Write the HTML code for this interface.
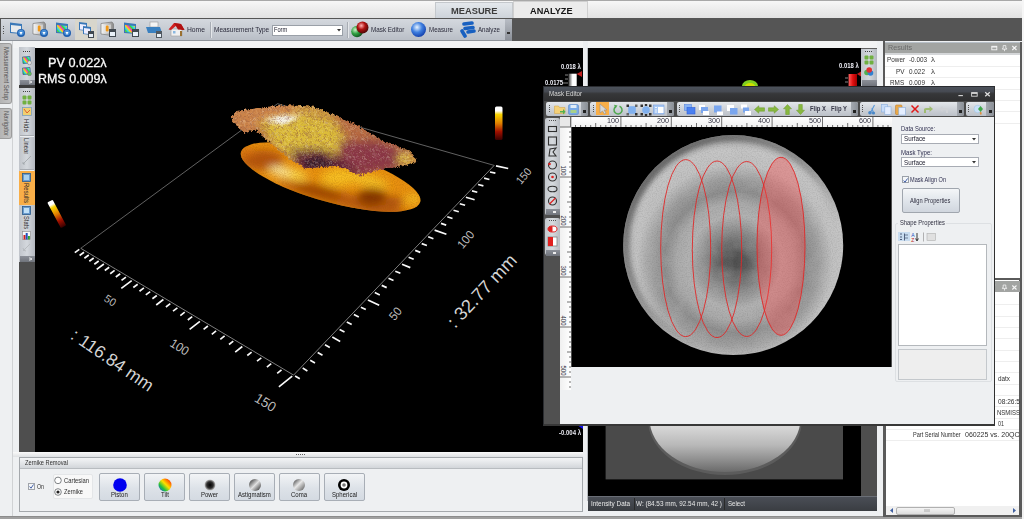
<!DOCTYPE html>
<html><head><meta charset="utf-8"><style>*{margin:0;padding:0;box-sizing:border-box}html,body{width:1024px;height:519px;overflow:hidden;background:#eef0f2;font-family:"Liberation Sans",sans-serif}.a{position:absolute}.t{position:absolute;white-space:nowrap;line-height:1;font-family:"Liberation Sans",sans-serif}</style></head><body>
<div class="a" style="left:0px;top:0px;width:1024px;height:519px;background:#eef0f2;"></div>
<div class="a" style="left:0px;top:0px;width:1024px;height:1px;background:#a8a8a8;"></div>
<div class="a" style="left:0px;top:1px;width:1022px;height:17px;background:linear-gradient(#f7f7f7,#ececec 50%,#e2e2e2);"></div>
<div class="a" style="left:1022px;top:0px;width:2px;height:519px;background:#f6f6f6;"></div>
<div class="a" style="left:435px;top:2px;width:78px;height:16px;background:linear-gradient(#e4e8ec,#cdd3da);border:1px solid #c4c8cc;border-bottom:none"></div>
<div class="t" style="left:451.4px;top:5.63px;font-size:9.7px;color:#3c3c3c;font-weight:bold;transform:scaleX(0.961);transform-origin:0 0;">MEASURE</div>
<div class="a" style="left:513px;top:1px;width:75px;height:17px;background:#ebebeb;border:1px solid #cfcfcf;border-bottom:none"></div>
<div class="t" style="left:530.0px;top:5.63px;font-size:9.7px;color:#161616;font-weight:bold;transform:scaleX(0.948);transform-origin:0 0;">ANALYZE</div>
<div class="a" style="left:0px;top:18px;width:1022px;height:23px;background:#555555;"></div>
<div class="a" style="left:1px;top:19px;width:511px;height:21px;background:linear-gradient(#d4d8de,#c6cbd2 55%,#b9bec6);"></div>
<div class="a" style="left:1px;top:40px;width:511px;height:1px;background:#8e939a;"></div>
<div class="a" style="left:505px;top:19px;width:7px;height:21px;background:linear-gradient(#b8bdc5,#8c9199);"></div>
<div class="a" style="left:507px;top:32px;width:3px;height:2px;background:#333;"></div>
<div class="a" style="left:3px;top:26.0px;width:1px;height:1px;background:#555;"></div>
<div class="a" style="left:3px;top:28.4px;width:1px;height:1px;background:#555;"></div>
<div class="a" style="left:3px;top:30.8px;width:1px;height:1px;background:#555;"></div>
<div class="a" style="left:3px;top:33.2px;width:1px;height:1px;background:#555;"></div>
<svg width="0" height="0" style="position:absolute"><defs><linearGradient id="silv" x1="0" y1="0" x2="1" y2="0"><stop offset="0" stop-color="#fafafa"/><stop offset="0.5" stop-color="#c4c4c4"/><stop offset="1" stop-color="#8a8a8a"/></linearGradient><linearGradient id="rb" x1="0" y1="0" x2="0.6" y2="-0.4" spreadMethod="repeat"><stop offset="0" stop-color="#ffe000"/><stop offset="0.25" stop-color="#ff30c0"/><stop offset="0.5" stop-color="#30e030"/><stop offset="0.75" stop-color="#30d0ff"/><stop offset="1" stop-color="#ffe000"/></linearGradient></defs></svg>
<svg class="a" style="left:9px;top:21px" width="17" height="16" viewBox="0 0 17 16"><path d="M1 1.5 L13 3 L13 13 L1 12 Z" fill="#3a78b8"/><path d="M2 4 L12 5 L12 12 L2 11 Z" fill="#e8eaec"/><circle cx="12" cy="12" r="4" fill="#2060b0"/><circle cx="12" cy="11.5" r="2.8" fill="#4a90d8"/><path d="M10.5 11 L13.5 11 L12 14 Z" fill="#fff"/></svg>
<svg class="a" style="left:32px;top:21px" width="17" height="16" viewBox="0 0 17 16"><path d="M1 2.5 L12 1 L13.5 3 L13.5 13 L12 14.5 L1 13 Z" fill="url(#silv)" stroke="#7a7a7a" stroke-width="0.7"/><path d="M3 4 L11 3.5 L11 12 L3 11.5Z" fill="#e8e8e8" opacity="0.6"/><rect x="5.8" y="4.5" width="2.8" height="6" rx="1.2" fill="#f09818"/><circle cx="12" cy="12" r="4" fill="#2060b0"/><circle cx="12" cy="11.5" r="2.8" fill="#4a90d8"/><path d="M10.5 11 L13.5 11 L12 14 Z" fill="#fff"/></svg>
<svg class="a" style="left:55px;top:21px" width="17" height="16" viewBox="0 0 17 16"><path d="M1 1.5 L13 3 L13 13 L1 12 Z" fill="#3a78b8"/><path d="M2 4 L12 5 L12 12 L2 11 Z" fill="url(#rb)"/><circle cx="12" cy="12" r="4" fill="#2060b0"/><circle cx="12" cy="11.5" r="2.8" fill="#4a90d8"/><path d="M10.5 11 L13.5 11 L12 14 Z" fill="#fff"/></svg>
<div class="a" style="left:75px;top:19px;width:22px;height:21px;background:#d8d6cc;"></div>
<svg class="a" style="left:78px;top:21px" width="17" height="17" viewBox="0 0 17 17"><path d="M1 1 L9 2 L9 10 L1 9Z" fill="#3a78b8"/><path d="M2 3 L8 3.8 L8 9 L2 8.4Z" fill="#eef"/><path d="M5 5 L13 6 L13 14 L5 13Z" fill="#3a78b8"/><path d="M6 7 L12 7.8 L12 13 L6 12.4Z" fill="#eef"/><rect x="10" y="10" width="6" height="7" fill="#404850"/><rect x="11" y="13" width="4" height="3" fill="#e8f0f8"/></svg>
<svg class="a" style="left:100px;top:21px" width="17" height="16" viewBox="0 0 17 16"><path d="M1 2.5 L12 1 L13.5 3 L13.5 13 L12 14.5 L1 13 Z" fill="url(#silv)" stroke="#7a7a7a" stroke-width="0.7"/><path d="M3 4 L11 3.5 L11 12 L3 11.5Z" fill="#e8e8e8" opacity="0.6"/><rect x="5.8" y="4.5" width="2.8" height="6" rx="1.2" fill="#f09818"/><rect x="9" y="8" width="7" height="8" fill="#404850"/><rect x="10" y="11" width="5" height="4" fill="#e8f0f8"/></svg>
<svg class="a" style="left:123px;top:21px" width="17" height="16" viewBox="0 0 17 16"><path d="M1 1.5 L13 3 L13 13 L1 12 Z" fill="#3a78b8"/><path d="M2 4 L12 5 L12 12 L2 11 Z" fill="url(#rb)"/><rect x="9" y="8" width="7" height="8" fill="#404850"/><rect x="10" y="11" width="5" height="4" fill="#e8f0f8"/></svg>
<svg class="a" style="left:145px;top:21px" width="18" height="17" viewBox="0 0 18 17"><rect x="5" y="1" width="8" height="5" fill="#f4f4f4" stroke="#999" stroke-width="0.6"/><path d="M1 6 L15 6 L17 12 L3 12Z" fill="#3a80c0"/><path d="M3 12 L17 12 L16 14 L4 14Z" fill="#c8c8c8"/><rect x="11" y="10" width="6" height="7" fill="#505860"/><rect x="12" y="13" width="4" height="3" fill="#e8f0f8"/></svg>
<svg class="a" style="left:168px;top:22px" width="17" height="15" viewBox="0 0 17 15"><path d="M3 7 L3 14 L14 14 L14 7Z" fill="#f0f0f0" stroke="#a0a0a0" stroke-width="0.6"/><path d="M0.5 7.5 L6 1 L13 2 L16.5 8 L14 8 L9 3 L3 8Z" fill="#d02020"/><path d="M6 1 L13 2 L16.5 8 L10 7.5Z" fill="#b01010"/><rect x="5" y="9" width="2.5" height="2.5" fill="#8ab8e0"/><rect x="12" y="9" width="2" height="5" fill="#9a7030"/></svg>
<div class="t" style="left:187.0px;top:25.74px;font-size:7.3px;color:#2a2a3a;transform:scaleX(0.924);transform-origin:0 0;">Home</div>
<div class="a" style="left:210px;top:22px;width:1px;height:16px;background:#a8adb4;"></div>
<div class="a" style="left:211px;top:22px;width:1px;height:16px;background:#e4e7ea;"></div>
<div class="t" style="left:213.6px;top:25.74px;font-size:7.3px;color:#2a2a3a;transform:scaleX(0.885);transform-origin:0 0;">Measurement Type</div>
<div class="a" style="left:272px;top:24.5px;width:71px;height:11px;background:#ffffff;border:1px solid #9aa0a8"></div>
<div class="t" style="left:273.8px;top:25.94px;font-size:7.3px;color:#1a1a2a;transform:scaleX(0.778);transform-origin:0 0;">Form</div>
<svg class="a" style="left:337px;top:29px" width="4" height="3"><path d="M0 0 L4 0 L2 2.5Z" fill="#333"/></svg>
<div class="a" style="left:347px;top:22px;width:1px;height:16px;background:#a8adb4;"></div>
<div class="a" style="left:348px;top:22px;width:1px;height:16px;background:#e4e7ea;"></div>
<svg class="a" style="left:351px;top:21px" width="18" height="17" viewBox="0 0 18 17"><defs><radialGradient id="gg" cx="0.35" cy="0.35" r="0.7"><stop offset="0" stop-color="#c8f0c8"/><stop offset="0.5" stop-color="#30a040"/><stop offset="1" stop-color="#105020"/></radialGradient><radialGradient id="rg" cx="0.4" cy="0.35" r="0.7"><stop offset="0" stop-color="#ffb0b0"/><stop offset="0.45" stop-color="#b01010"/><stop offset="1" stop-color="#400808"/></radialGradient></defs><circle cx="6" cy="10.5" r="5.8" fill="url(#gg)"/><circle cx="11.5" cy="6.5" r="6" fill="url(#rg)"/></svg>
<div class="t" style="left:370.7px;top:25.74px;font-size:7.3px;color:#2a2a3a;transform:scaleX(0.864);transform-origin:0 0;">Mask Editor</div>
<svg class="a" style="left:410px;top:21px" width="17" height="17" viewBox="0 0 17 17"><defs><radialGradient id="bg1" cx="0.4" cy="0.35" r="0.75"><stop offset="0" stop-color="#e8f4ff"/><stop offset="0.45" stop-color="#4080e0"/><stop offset="1" stop-color="#0830a0"/></radialGradient></defs><circle cx="8.5" cy="8.5" r="7.5" fill="url(#bg1)"/></svg>
<div class="t" style="left:429.0px;top:25.74px;font-size:7.3px;color:#2a2a3a;transform:scaleX(0.845);transform-origin:0 0;">Measure</div>
<svg class="a" style="left:459px;top:21px" width="18" height="17" viewBox="0 0 18 17"><g stroke-linecap="round"><line x1="5" y1="3" x2="13" y2="2" stroke="#1860c0" stroke-width="3.6"/><line x1="6" y1="7.5" x2="14" y2="6.5" stroke="#1860c0" stroke-width="3.6"/><line x1="9" y1="11" x2="15" y2="10" stroke="#1860c0" stroke-width="3.6"/><line x1="3" y1="10" x2="6" y2="15" stroke="#1860c0" stroke-width="3.6"/></g></svg>
<div class="t" style="left:478.0px;top:25.74px;font-size:7.3px;color:#2a2a3a;transform:scaleX(0.847);transform-origin:0 0;">Analyze</div>
<div class="a" style="left:0px;top:41px;width:1022px;height:478px;background:#eef0f2;"></div>
<div class="a" style="left:12px;top:41px;width:1px;height:478px;background:#d0d2d4;"></div>
<div class="a" style="left:13px;top:41px;width:570px;height:7px;background:#f2f3f4;"></div>
<div class="a" style="left:0px;top:516px;width:1024px;height:3px;background:#8c8c8c;"></div>
<div class="a" style="left:0px;top:517px;width:1024px;height:2px;background:#a0a0a0;"></div>
<div class="a" style="left:0px;top:43px;width:12px;height:61px;background:linear-gradient(90deg,#b4b4b4,#c4c4c4);border-radius:0 3px 3px 0;border:1px solid #9c9c9c;border-left:none"></div>
<div class="a" style="left:0px;top:108px;width:12px;height:31px;background:linear-gradient(90deg,#b4b4b4,#c4c4c4);border-radius:0 3px 3px 0;border:1px solid #9c9c9c;border-left:none"></div>
<div class="t" style="left:6.2px;top:46.5px;font-size:6.5px;color:#555555;transform:translate(0,0) rotate(90deg) scaleX(0.907) translate(0,-50%);transform-origin:0 0;">Measurement Setup</div>
<div class="t" style="left:6.2px;top:111.0px;font-size:6.5px;color:#555555;transform:translate(0,0) rotate(90deg) scaleX(0.899) translate(0,-50%);transform-origin:0 0;">Navigator</div>
<div class="a" style="left:19px;top:47px;width:16px;height:405px;background:#4e4e4e;"></div>
<div class="a" style="left:19px;top:47px;width:16px;height:38px;background:linear-gradient(90deg,#c0c4ca,#d4d8dd 50%,#b4b8bf);"></div>
<div class="a" style="left:23px;top:50.5px;width:1px;height:1px;background:#404040;"></div><div class="a" style="left:25px;top:50.5px;width:1px;height:1px;background:#404040;"></div><div class="a" style="left:27px;top:50.5px;width:1px;height:1px;background:#404040;"></div><div class="a" style="left:29px;top:50.5px;width:1px;height:1px;background:#404040;"></div>
<div class="a" style="left:20px;top:79.5px;width:15px;height:5.5px;background:linear-gradient(#8c9098,#70747c);"></div>
<svg class="a" style="left:29px;top:80px" width="5" height="5"><path d="M0 0L0 4M1 1L3 2L1 3" stroke="#fff" stroke-width="0.8" fill="none"/></svg>
<svg class="a" style="left:22px;top:55.5px" width="10" height="9" viewBox="0 0 10 9"><path d="M0.5 1 L8 0.5 L8.5 7 L1 7.5Z" fill="url(#rb)" stroke="#2a5a9a" stroke-width="0.7"/><circle cx="7.5" cy="6.8" r="2" fill="#e0e0e0" stroke="#666" stroke-width="0.4"/></svg>
<svg class="a" style="left:22px;top:67px" width="10" height="9" viewBox="0 0 10 9"><path d="M0.5 1 L8 0.5 L8.5 7 L1 7.5Z" fill="url(#rb)" stroke="#2a5a9a" stroke-width="0.7"/><circle cx="7.5" cy="6.8" r="2" fill="#60c060" stroke="#666" stroke-width="0.4"/></svg>
<div class="a" style="left:19px;top:85px;width:16px;height:3px;background:#3e3e3e;"></div>
<div class="a" style="left:19px;top:88px;width:16px;height:174px;background:linear-gradient(90deg,#c0c4ca,#d4d8dd 50%,#b4b8bf);"></div>
<div class="a" style="left:23px;top:90.5px;width:1px;height:1px;background:#404040;"></div><div class="a" style="left:25px;top:90.5px;width:1px;height:1px;background:#404040;"></div><div class="a" style="left:27px;top:90.5px;width:1px;height:1px;background:#404040;"></div><div class="a" style="left:29px;top:90.5px;width:1px;height:1px;background:#404040;"></div>
<svg class="a" style="left:22px;top:95px" width="10" height="10" viewBox="0 0 10 10"><g fill="#70b040"><rect x="0.5" y="0.5" width="4" height="4" rx="1"/><rect x="5.5" y="0.5" width="4" height="4" rx="1"/><rect x="0.5" y="5.5" width="4" height="4" rx="1"/><rect x="5.5" y="5.5" width="4" height="4" rx="1"/></g></svg>
<svg class="a" style="left:22px;top:107px" width="10" height="9" viewBox="0 0 10 9"><rect x="0.5" y="0.5" width="9" height="8" fill="#f0d070" stroke="#7aa0c0" stroke-width="0.8"/><path d="M2 2 L5 6 L8 3" stroke="#e06030" stroke-width="1" fill="none"/></svg>
<div class="t" style="left:26.2px;top:118.5px;font-size:7px;color:#2a2a2a;transform:translate(0,0) rotate(90deg) scaleX(0.903) translate(0,-50%);transform-origin:0 0;">Hide</div>
<div class="a" style="left:20px;top:134.5px;width:14px;height:1px;background:#a8acb2;"></div>
<div class="a" style="left:20px;top:135.5px;width:14px;height:1px;background:#eceef0;"></div>
<div class="t" style="left:26.2px;top:137.7px;font-size:7px;color:#2a2a2a;transform:translate(0,0) rotate(90deg) scaleX(0.827) translate(0,-50%);transform-origin:0 0;">Linear</div>
<svg class="a" style="left:22px;top:155px" width="10" height="10"><path d="M1 9 L9 1 M1 9 L1 7 M3 9 L1 9" stroke="#a0a4a8" stroke-width="0.8" fill="none"/></svg>
<div class="a" style="left:20px;top:168.5px;width:14px;height:1px;background:#a8acb2;"></div>
<div class="a" style="left:20px;top:169.5px;width:14px;height:1px;background:#eceef0;"></div>
<div class="a" style="left:19px;top:171px;width:16px;height:33.5px;background:#f8ae48;"></div>
<svg class="a" style="left:22px;top:173px" width="9" height="9"><rect x="0.5" y="0.5" width="8" height="8" fill="#6a9cd0" stroke="#2a5a8a" stroke-width="0.8"/><rect x="2" y="2" width="5" height="5" fill="#a8d0f0"/></svg>
<div class="t" style="left:26.2px;top:183.0px;font-size:7px;color:#2a2a2a;transform:translate(0,0) rotate(90deg) scaleX(0.857) translate(0,-50%);transform-origin:0 0;">Results</div>
<svg class="a" style="left:22px;top:206px" width="9" height="9"><rect x="0.5" y="0.5" width="8" height="8" fill="#6a9cd0" stroke="#2a5a8a" stroke-width="0.8"/><rect x="2" y="2" width="5" height="5" fill="#c0e0f8"/></svg>
<div class="t" style="left:26.2px;top:216.0px;font-size:7px;color:#2a2a2a;transform:translate(0,0) rotate(90deg) scaleX(0.815) translate(0,-50%);transform-origin:0 0;">Stats</div>
<svg class="a" style="left:22px;top:231px" width="9" height="9"><rect x="0.5" y="0.5" width="8" height="8" fill="#f8f8f8" stroke="#888" stroke-width="0.6"/><rect x="1.5" y="4" width="2" height="4.5" fill="#d02020"/><rect x="3.7" y="2" width="2" height="6.5" fill="#2050c0"/><rect x="5.9" y="5" width="2" height="3.5" fill="#30a030"/></svg>
<svg class="a" style="left:22px;top:243px" width="10" height="9"><path d="M1 8 L8 1 M4 8 A3 3 0 0 1 1 5" stroke="#b8bcc0" stroke-width="1" fill="none"/></svg>
<div class="a" style="left:20px;top:255.5px;width:15px;height:6.5px;background:linear-gradient(#8c9098,#70747c);"></div>
<svg class="a" style="left:29px;top:257px" width="5" height="5"><path d="M0 0L0 4M1 1L3 2L1 3" stroke="#fff" stroke-width="0.8" fill="none"/></svg>
<div class="a" style="left:13px;top:452px;width:570px;height:5px;background:linear-gradient(#fafafa,#dfe1e3);"></div>
<div class="a" style="left:295.8px;top:454px;width:1.2px;height:1.2px;background:#606060;"></div>
<div class="a" style="left:297.90000000000003px;top:454px;width:1.2px;height:1.2px;background:#606060;"></div>
<div class="a" style="left:300.0px;top:454px;width:1.2px;height:1.2px;background:#606060;"></div>
<div class="a" style="left:302.1px;top:454px;width:1.2px;height:1.2px;background:#606060;"></div>
<div class="a" style="left:304.2px;top:454px;width:1.2px;height:1.2px;background:#606060;"></div>
<div class="a" style="left:19px;top:457px;width:564px;height:55px;background:#eef0f2;border:1px solid #a4a8ac"></div>
<div class="a" style="left:20px;top:458px;width:562px;height:10px;background:linear-gradient(#f4f5f6,#e0e3e6 60%,#d2d6da);"></div>
<div class="a" style="left:20px;top:467.5px;width:562px;height:1px;background:#b8bcc0;"></div>
<div class="t" style="left:25.0px;top:459.13px;font-size:7.5px;color:#303030;transform:scaleX(0.759);transform-origin:0 0;">Zernike Removal</div>
<div class="a" style="left:28px;top:483px;width:7px;height:7px;background:#f4f6f8;border:1px solid #a0a4aa"></div>
<svg class="a" style="left:29px;top:484px" width="5" height="5"><path d="M0.6 2.5 L2 4.2 L4.5 0.5" stroke="#3050a0" stroke-width="0.9" fill="none"/></svg>
<div class="t" style="left:37.0px;top:483.04px;font-size:7.5px;color:#303030;transform:scaleX(0.700);transform-origin:0 0;">On</div>
<div class="a" style="left:52.5px;top:474px;width:40.5px;height:25px;background:#f8f8f8;border:1px solid #e4e6e8;border-radius:2px"></div>
<svg class="a" style="left:54px;top:476px" width="9" height="20"><circle cx="4" cy="4.4" r="3.3" fill="#fff" stroke="#606468" stroke-width="0.8"/><circle cx="4" cy="16" r="3.3" fill="#fff" stroke="#606468" stroke-width="0.8"/><circle cx="4" cy="16" r="1.6" fill="#202020"/></svg>
<div class="t" style="left:64.0px;top:476.84px;font-size:7.5px;color:#303030;transform:scaleX(0.779);transform-origin:0 0;">Cartesian</div>
<div class="t" style="left:64.0px;top:488.44px;font-size:7.5px;color:#303030;transform:scaleX(0.760);transform-origin:0 0;">Zernike</div>
<div class="a" style="left:99.3px;top:472.5px;width:41px;height:28px;background:linear-gradient(#f2f4f6,#dde2e8 55%,#d4dae2);border:1px solid #a8aeb6;border-radius:2px"></div>
<svg class="a" style="left:112.8px;top:478px" width="14" height="14" viewBox="0 0 14 14"><circle cx="7" cy="7" r="6.8" fill="#0000f0"/></svg>
<div class="t" style="left:111.4px;top:491.09px;font-size:7px;color:#202020;transform:scaleX(0.860);transform-origin:0 0;">Piston</div>
<div class="a" style="left:144px;top:472.5px;width:41px;height:28px;background:linear-gradient(#f2f4f6,#dde2e8 55%,#d4dae2);border:1px solid #a8aeb6;border-radius:2px"></div>
<svg class="a" style="left:157.5px;top:478px" width="14" height="14" viewBox="0 0 14 14"><defs><linearGradient id="tg" x1="0" y1="1" x2="1" y2="0"><stop offset="0" stop-color="#2040ff"/><stop offset="0.3" stop-color="#20c040"/><stop offset="0.55" stop-color="#ffe000"/><stop offset="0.8" stop-color="#ff6000"/><stop offset="1" stop-color="#e00000"/></linearGradient></defs><circle cx="7" cy="7" r="6.5" fill="url(#tg)"/></svg>
<div class="t" style="left:160.6px;top:491.09px;font-size:7px;color:#202020;transform:scaleX(0.860);transform-origin:0 0;">Tilt</div>
<div class="a" style="left:189.4px;top:472.5px;width:41px;height:28px;background:linear-gradient(#f2f4f6,#dde2e8 55%,#d4dae2);border:1px solid #a8aeb6;border-radius:2px"></div>
<svg class="a" style="left:202.9px;top:478px" width="14" height="14" viewBox="0 0 14 14"><defs><radialGradient id="pg"><stop offset="0" stop-color="#000"/><stop offset="0.6" stop-color="#303030"/><stop offset="1" stop-color="#c0c0c0"/></radialGradient></defs><circle cx="7" cy="7" r="5.5" fill="url(#pg)"/></svg>
<div class="t" style="left:201.4px;top:491.09px;font-size:7px;color:#202020;transform:scaleX(0.860);transform-origin:0 0;">Power</div>
<div class="a" style="left:234px;top:472.5px;width:41px;height:28px;background:linear-gradient(#f2f4f6,#dde2e8 55%,#d4dae2);border:1px solid #a8aeb6;border-radius:2px"></div>
<svg class="a" style="left:247.5px;top:478px" width="14" height="14" viewBox="0 0 14 14"><defs><linearGradient id="ag" x1="0" y1="0" x2="1" y2="1"><stop offset="0" stop-color="#202020"/><stop offset="0.5" stop-color="#e0e0e0"/><stop offset="1" stop-color="#202020"/></linearGradient></defs><circle cx="7" cy="7" r="6" fill="url(#ag)"/></svg>
<div class="t" style="left:238.1px;top:491.09px;font-size:7px;color:#202020;transform:scaleX(0.860);transform-origin:0 0;">Astigmatism</div>
<div class="a" style="left:278.5px;top:472.5px;width:41px;height:28px;background:linear-gradient(#f2f4f6,#dde2e8 55%,#d4dae2);border:1px solid #a8aeb6;border-radius:2px"></div>
<svg class="a" style="left:292.0px;top:478px" width="14" height="14" viewBox="0 0 14 14"><defs><linearGradient id="cg" x1="0" y1="0" x2="1" y2="1"><stop offset="0" stop-color="#303030"/><stop offset="0.45" stop-color="#e8e8e8"/><stop offset="1" stop-color="#505050"/></linearGradient></defs><circle cx="7" cy="7" r="6" fill="url(#cg)"/></svg>
<div class="t" style="left:291.0px;top:491.09px;font-size:7px;color:#202020;transform:scaleX(0.860);transform-origin:0 0;">Coma</div>
<div class="a" style="left:323.5px;top:472.5px;width:41px;height:28px;background:linear-gradient(#f2f4f6,#dde2e8 55%,#d4dae2);border:1px solid #a8aeb6;border-radius:2px"></div>
<svg class="a" style="left:337.0px;top:478px" width="14" height="14" viewBox="0 0 14 14"><circle cx="7" cy="7" r="6" fill="#000"/><circle cx="7" cy="7" r="3.4" fill="#fff"/><circle cx="7" cy="7" r="1.8" fill="#777"/></svg>
<div class="t" style="left:331.5px;top:491.09px;font-size:7px;color:#202020;transform:scaleX(0.860);transform-origin:0 0;">Spherical</div>
<div class="a" style="left:34.6px;top:48px;width:548px;height:403.7px;background:#000;"></div>
<svg class="a" style="left:0;top:0" width="1024" height="519" viewBox="0 0 1024 519"><defs><clipPath id="plotclip"><rect x="34.6" y="48" width="548" height="403.7"/></clipPath><filter id="noise1" x="0" y="0" width="100%" height="100%"><feTurbulence type="fractalNoise" baseFrequency="0.55" numOctaves="2" seed="3"/><feColorMatrix type="matrix" values="0 0 0 0 0  0 0 0 0 0  0 0 0 0 0  0 0 0 -1.6 1.05"/></filter><filter id="noise2" x="0" y="0" width="100%" height="100%"><feTurbulence type="fractalNoise" baseFrequency="0.035" numOctaves="3" seed="7"/><feColorMatrix type="matrix" values="0 0 0 0 0.45  0 0 0 0 0.12  0 0 0 0 0  0 0 0 -2.2 1.25"/></filter><radialGradient id="ellg" cx="0.3" cy="0.45" r="0.8"><stop offset="0" stop-color="#ffe070"/><stop offset="0.35" stop-color="#f0b020"/><stop offset="1" stop-color="#d88a10"/></radialGradient><linearGradient id="blobg" x1="0" y1="0" x2="1" y2="0.3"><stop offset="0" stop-color="#c88040"/><stop offset="0.25" stop-color="#d8a850"/><stop offset="0.45" stop-color="#d8b040"/><stop offset="0.7" stop-color="#a86048"/><stop offset="0.9" stop-color="#b07040"/><stop offset="1" stop-color="#d8b040"/></linearGradient><linearGradient id="cbar1" x1="0" y1="0" x2="0" y2="1"><stop offset="0" stop-color="#ffffff"/><stop offset="0.13" stop-color="#ffffff"/><stop offset="0.24" stop-color="#f8d400"/><stop offset="0.5" stop-color="#e08000"/><stop offset="0.75" stop-color="#a01000"/><stop offset="1" stop-color="#380000"/></linearGradient><linearGradient id="cbar2" x1="0" y1="0" x2="1" y2="0"><stop offset="0" stop-color="#404040"/><stop offset="0.5" stop-color="#ffffff"/><stop offset="1" stop-color="#ffffff"/></linearGradient></defs><g clip-path="url(#plotclip)"><path d="M80.75 248.3 L277.5 103.7 L494.2 165.4" stroke="#7a7a7a" stroke-width="0.8" fill="none"/><defs><filter id="blur4" x="-20%" y="-20%" width="140%" height="140%"><feGaussianBlur stdDeviation="4"/></filter><filter id="blur2" x="-20%" y="-20%" width="140%" height="140%"><feGaussianBlur stdDeviation="2.2"/></filter><filter id="speck" x="0" y="0" width="100%" height="100%"><feTurbulence type="turbulence" baseFrequency="0.38" numOctaves="2" seed="5"/><feColorMatrix type="matrix" values="0 0 0 0 1  0 0 0 0 0.95  0 0 0 0 0.8  2.4 0 0 0 -0.55"/></filter><filter id="speckd" x="0" y="0" width="100%" height="100%"><feTurbulence type="turbulence" baseFrequency="0.42" numOctaves="2" seed="9"/><feColorMatrix type="matrix" values="0 0 0 0 0.25  0 0 0 0 0.08  0 0 0 0 0.05  0 2.4 0 0 -0.45"/></filter><filter id="jag" x="-5%" y="-5%" width="110%" height="110%"><feTurbulence type="turbulence" baseFrequency="0.25" numOctaves="2" seed="4" result="t"/><feDisplacementMap in="SourceGraphic" in2="t" scale="4" xChannelSelector="R" yChannelSelector="G"/></filter><filter id="grain" x="0" y="0" width="100%" height="100%"><feTurbulence type="fractalNoise" baseFrequency="0.9" numOctaves="1" seed="2"/><feColorMatrix type="matrix" values="0 0 0 0 0.3  0 0 0 0 0.1  0 0 0 0 0  0 0 1.5 0 -0.6"/></filter></defs><clipPath id="ellclip2"><ellipse cx="0" cy="0" rx="93" ry="25" transform="translate(330.6 177) rotate(15.6)"/></clipPath><g clip-path="url(#ellclip2)"><rect x="230" y="135" width="200" height="85" fill="#e89010"/><g filter="url(#blur4)"><ellipse cx="262" cy="160" rx="22" ry="10" fill="#b45208"/><ellipse cx="246" cy="152" rx="8" ry="5" fill="#d87010"/><ellipse cx="288" cy="173" rx="20" ry="5" fill="#ffe050" transform="rotate(12 288 173)"/><ellipse cx="280" cy="171" rx="11" ry="3" fill="#fff8c0" transform="rotate(12 280 171)"/><ellipse cx="345" cy="200" rx="70" ry="7" fill="#b85808" transform="rotate(15 345 200)"/><ellipse cx="318" cy="191" rx="24" ry="6" fill="#9c4406" transform="rotate(12 318 191)"/><ellipse cx="360" cy="178" rx="30" ry="6" fill="#f8c428" transform="rotate(15 360 178)"/><ellipse cx="338" cy="178" rx="18" ry="8" fill="#f8c020"/><ellipse cx="372" cy="197" rx="15" ry="9" fill="#843606"/><ellipse cx="394" cy="202" rx="9" ry="5" fill="#a84c08"/><ellipse cx="413" cy="199" rx="8" ry="4" fill="#f8c828"/></g><rect x="230" y="135" width="200" height="85" fill="#000" filter="url(#grain)" opacity="0.45"/></g><clipPath id="blobclip"><path d="M229.6 115.5 L236.0 110.0 L248.9 108.2 L268.0 105.8 L285.0 104.2 L311.5 105.8 L328.4 111.9 L354.9 123.9 L383.8 140.8 L410.3 150.4 L415.6 160.0 L403.0 164.8 L376.5 168.5 L359.7 174.5 L335.6 164.8 L304.3 167.3 L287.4 157.6 L268.2 140.8 L253.7 128.7 L244.0 132.3 L236.9 126.3Z"/></clipPath><g filter="url(#jag)"><g clip-path="url(#blobclip)"><rect x="225" y="100" width="195" height="80" fill="#b87040"/><g filter="url(#blur4)"><path d="M225 100 L320 100 L300 114 L265 120 L250 132 L225 132Z" fill="#cc8448"/><path d="M258 121 L298 113 L332 118 L346 140 L350 160 L335 165 L305 166 L287 157 L268 140Z" fill="#dcbc38"/><path d="M290 102 L335 102 L334 114 L300 113Z" fill="#d0a040"/><path d="M334 108 L380 130 L410 148 L385 150 L345 138Z" fill="#b86a40"/><path d="M338 140 L378 140 L406 152 L400 166 L360 175 L336 164Z" fill="#8a3444"/><path d="M288 148 L322 148 L345 160 L360 176 L300 172Z" fill="#5e2434"/><ellipse cx="405" cy="158" rx="9" ry="6" fill="#e4c440"/></g><g filter="url(#blur2)"><path d="M262 119 L282 114 L300 115 L282 124Z" fill="#f8f8f0"/><path d="M302 160 L318 155 L336 165 L308 168Z" fill="#3a1c2a"/></g><rect x="225" y="100" width="195" height="80" fill="#000" filter="url(#speckd)" opacity="0.5"/><rect x="225" y="100" width="195" height="80" fill="#000" filter="url(#speck)" opacity="0.26"/></g></g><path d="M80.75 248.3 L293.6 375.1 L494.2 165.4" stroke="#8a8a8a" stroke-width="0.9" fill="none"/><path d="M79.3 249.4 l-4.5 3.2 M84.0 252.2 l-4.4 3.3 M88.8 255.0 l-4.4 3.3 M93.7 258.0 l-4.4 3.3 M98.7 261.0 l-4.4 3.3 M103.9 264.0 l-7.2 5.4 M109.2 267.2 l-4.4 3.3 M114.6 270.4 l-4.4 3.3 M120.2 273.7 l-4.4 3.3 M125.9 277.1 l-4.4 3.3 M131.7 280.6 l-10.4 7.8 M137.7 284.2 l-4.4 3.3 M143.9 287.9 l-4.4 3.3 M150.2 291.6 l-4.4 3.3 M156.8 295.5 l-4.4 3.3 M163.4 299.5 l-7.2 5.5 M170.3 303.6 l-4.4 3.4 M177.4 307.8 l-4.4 3.4 M184.7 312.2 l-4.4 3.4 M192.2 316.6 l-4.4 3.4 M199.9 321.3 l-10.3 8.0 M207.9 326.0 l-4.3 3.4 M216.1 330.9 l-4.3 3.4 M224.6 335.9 l-4.3 3.4 M233.3 341.1 l-4.3 3.4 M242.3 346.5 l-7.1 5.6 M251.6 352.1 l-4.3 3.4 M261.3 357.8 l-4.3 3.4 M271.2 363.7 l-4.3 3.5 M281.5 369.9 l-4.3 3.5 M292.2 376.2 l-13.3 10.7 M295.1 376.0 l4.7 2.8 M302.7 368.1 l4.7 2.8 M310.2 360.3 l4.8 2.7 M317.7 352.5 l4.8 2.7 M325.0 344.8 l4.8 2.6 M332.3 337.1 l7.9 4.3 M339.6 329.5 l4.9 2.6 M346.8 322.0 l4.9 2.5 M353.9 314.6 l4.9 2.5 M360.9 307.2 l4.9 2.4 M367.9 299.9 l11.3 5.3 M374.8 292.6 l5.0 2.3 M381.7 285.4 l5.0 2.2 M388.5 278.3 l5.0 2.2 M395.3 271.2 l5.1 2.1 M402.0 264.2 l8.3 3.4 M408.6 257.3 l5.1 2.0 M415.2 250.4 l5.1 2.0 M421.7 243.6 l5.2 1.9 M428.2 236.8 l5.2 1.9 M434.6 230.1 l11.8 4.1 M441.0 223.4 l5.2 1.7 M447.3 216.8 l5.2 1.7 M453.5 210.2 l5.3 1.6 M459.8 203.7 l5.3 1.6 M465.9 197.3 l8.7 2.5 M472.0 190.9 l5.3 1.4 M478.1 184.5 l5.3 1.4 M484.1 178.2 l5.3 1.3 M490.0 172.0 l5.4 1.2 M496.0 165.8 l12.2 2.7" stroke="#f8f8f8" stroke-width="1.7" fill="none"/><rect x="495" y="106.5" width="7.5" height="33.5" rx="1.5" fill="url(#cbar1)"/><g transform="translate(47.3 202.5) rotate(-28)"><rect x="0" y="0" width="6" height="29" rx="1" fill="url(#cbar1)"/></g><rect x="568.5" y="73.7" width="8.2" height="14" fill="url(#cbar2)"/><path d="M576.7 74 L582 71 L582 77Z" fill="#c02020"/><path d="M565 75 h3 M565 79 h3 M563 83 h5" stroke="#c0c0c0" stroke-width="0.7"/></g></svg>
<div class="t" style="left:48.4px;top:55.52px;font-size:13.5px;color:#f8f8f8;transform:scaleX(0.941);transform-origin:0 0;-webkit-text-stroke:0.3px #f8f8f8">PV 0.022λ</div>
<div class="t" style="left:38.3px;top:71.72px;font-size:13.5px;color:#f8f8f8;transform:scaleX(0.925);transform-origin:0 0;-webkit-text-stroke:0.3px #f8f8f8">RMS 0.009λ</div>
<div class="t" style="left:560.8px;top:63.79px;font-size:6.8px;color:#f0f0f8;font-weight:bold;transform:scaleX(0.868);transform-origin:0 0;">0.018 λ</div>
<div class="t" style="left:545.0px;top:80.09px;font-size:6.8px;color:#f0f0f8;font-weight:bold;transform:scaleX(0.866);transform-origin:0 0;">0.0175</div>
<div class="t" style="left:558.7px;top:429.89px;font-size:6.8px;color:#e8e8f0;font-weight:bold;transform:scaleX(0.882);transform-origin:0 0;">-0.004 λ</div>
<svg class="a" style="left:577px;top:425px" width="6" height="5"><path d="M0 0 L6 0 L6 4Z" fill="#1010f0"/></svg>
<div class="t" style="left:103.9px;top:295.3px;width:12.2px;font-size:11px;color:#bcbcbc;transform:rotate(32deg) scaleX(0.95);transform-origin:5.8px 5.5px">50</div>
<div class="t" style="left:169.4px;top:340.6px;width:20.9px;font-size:12.5px;color:#bcbcbc;transform:rotate(32deg) scaleX(0.95);transform-origin:9.9px 6.2px">100</div>
<div class="t" style="left:254.1px;top:394.6px;width:23.4px;font-size:14px;color:#bcbcbc;transform:rotate(32deg) scaleX(0.95);transform-origin:11.1px 7.0px">150</div>
<div class="t" style="left:389.3px;top:308.0px;width:13.3px;font-size:12px;color:#bcbcbc;transform:rotate(-50deg) scaleX(0.95);transform-origin:6.3px 6.0px">50</div>
<div class="t" style="left:455.5px;top:233.5px;width:20.0px;font-size:12px;color:#bcbcbc;transform:rotate(-50deg) scaleX(0.95);transform-origin:9.5px 6.0px">100</div>
<div class="t" style="left:514.8px;top:170.5px;width:18.4px;font-size:11px;color:#bcbcbc;transform:rotate(-50deg) scaleX(0.95);transform-origin:8.7px 5.5px">150</div>
<div class="t" style="left:63.5px;top:352.2px;width:96.0px;font-size:17.5px;color:#d4d4d4;transform:rotate(34.5deg) scaleX(1.0);transform-origin:48.0px 8.8px">: 116.84 mm</div>
<div class="t" style="left:436.2px;top:282.2px;width:92.5px;font-size:18.5px;color:#d4d4d4;transform:rotate(-47deg) scaleX(1.0);transform-origin:46.3px 9.2px">: 32.77 mm</div>
<div class="a" style="left:582.6px;top:41px;width:5.4px;height:460px;background:#eceef0;"></div>
<div class="a" style="left:587px;top:48px;width:1px;height:453px;background:#b8bcc0;"></div>
<div class="a" style="left:588px;top:41px;width:290px;height:7px;background:#f2f3f4;"></div>
<div class="a" style="left:588px;top:48px;width:273px;height:448px;background:#000;"></div>
<svg class="a" style="left:0;top:0" width="1024" height="519" viewBox="0 0 1024 519"><defs><linearGradient id="sph" x1="0" y1="0" x2="0" y2="1"><stop offset="0" stop-color="#e8e8e8"/><stop offset="0.55" stop-color="#dcdcdc"/><stop offset="0.75" stop-color="#b8b8b8"/><stop offset="0.9" stop-color="#8a8a8a"/><stop offset="1" stop-color="#6a6a6a"/></linearGradient><clipPath id="rpclip"><rect x="588" y="48" width="273" height="448"/></clipPath></defs><g clip-path="url(#rpclip)"><rect x="605.6" y="300" width="237.4" height="179.4" fill="#4a4a4a"/><ellipse cx="725" cy="420" rx="77" ry="55" fill="#5c5c5c"/><ellipse cx="725" cy="418.5" rx="75.5" ry="53.5" fill="url(#sph)"/><path d="M742 86 A8 6 0 0 1 758 86Z" fill="#80d020"/><path d="M745 86 A5 3 0 0 1 755 86Z" fill="#d0e000"/><defs><linearGradient id="redbar" x1="0" x2="1"><stop offset="0" stop-color="#ff6060"/><stop offset="0.5" stop-color="#e01010"/><stop offset="1" stop-color="#a00000"/></linearGradient></defs><rect x="848.6" y="74" width="8.4" height="14" fill="url(#redbar)"/><path d="M857 74 L861 71.5 L861 76.5Z" fill="#c02020"/><path d="M845 78 h3 M845 82 h3" stroke="#c0c0c0" stroke-width="0.7"/></g></svg>
<div class="t" style="left:839.2px;top:63.49px;font-size:6.8px;color:#f0f0f8;font-weight:bold;transform:scaleX(0.873);transform-origin:0 0;">0.018 λ</div>
<div class="a" style="left:861px;top:48px;width:16px;height:448px;background:#4e4e4e;"></div>
<div class="a" style="left:861px;top:48px;width:16px;height:38px;background:linear-gradient(90deg,#c0c4ca,#d4d8dd 50%,#b4b8bf);border-top:1px solid #606060"></div>
<div class="a" style="left:865px;top:51px;width:1px;height:1px;background:#404040;"></div><div class="a" style="left:867px;top:51px;width:1px;height:1px;background:#404040;"></div><div class="a" style="left:869px;top:51px;width:1px;height:1px;background:#404040;"></div><div class="a" style="left:871px;top:51px;width:1px;height:1px;background:#404040;"></div>
<svg class="a" style="left:864px;top:55px" width="10" height="10" viewBox="0 0 10 10"><g fill="#70b040"><rect x="0.5" y="0.5" width="4" height="4" rx="1"/><rect x="5.5" y="0.5" width="4" height="4" rx="1"/><rect x="0.5" y="5.5" width="4" height="4" rx="1"/><rect x="5.5" y="5.5" width="4" height="4" rx="1"/></g></svg>
<svg class="a" style="left:864px;top:67px" width="10" height="9" viewBox="0 0 10 9"><circle cx="3" cy="5.5" r="2.8" fill="#50b050"/><circle cx="6.5" cy="6" r="2.8" fill="#3080d0"/><circle cx="5.2" cy="3" r="2.8" fill="#e03030"/></svg>
<div class="a" style="left:862px;top:80px;width:15px;height:6px;background:linear-gradient(#8c9098,#70747c);"></div>
<div class="a" style="left:588px;top:496px;width:289px;height:15px;background:linear-gradient(#4a4e56,#3a3d42);border-top:1px solid #6a6e76"></div>
<div class="a" style="left:634px;top:498px;width:1px;height:12px;background:#2a2a2a;"></div>
<div class="a" style="left:724px;top:498px;width:1px;height:12px;background:#2a2a2a;"></div>
<div class="t" style="left:591.0px;top:500.19px;font-size:7px;color:#e8e8e8;transform:scaleX(0.911);transform-origin:0 0;">Intensity Data</div>
<div class="t" style="left:636.0px;top:500.19px;font-size:7px;color:#e8e8e8;transform:scaleX(0.907);transform-origin:0 0;">W: (84.53 mm, 92.54 mm, 42 )</div>
<div class="t" style="left:728.0px;top:500.19px;font-size:7px;color:#e8e8e8;transform:scaleX(0.874);transform-origin:0 0;">Select</div>
<div class="a" style="left:588px;top:511px;width:290px;height:5px;background:#eef0f2;"></div>
<div class="a" style="left:877px;top:41px;width:6px;height:475px;background:#eef0f2;"></div>
<div class="a" style="left:883px;top:41px;width:2px;height:476px;background:#5a5a5a;"></div>
<div class="a" style="left:885px;top:42px;width:136px;height:237px;background:#ffffff;border:1px solid #5a5a5a;border-left:none"></div>
<div class="a" style="left:885px;top:42.5px;width:135px;height:10px;background:#a2a4a2;"></div>
<div class="a" style="left:885px;top:52.5px;width:135px;height:2px;background:#d4d6d8;"></div>
<div class="a" style="left:885px;top:42px;width:135px;height:1px;background:#b8c0c8;"></div>
<div class="t" style="left:888.0px;top:44.03px;font-size:7.5px;color:#6a6a6a;transform:scaleX(0.960);transform-origin:0 0;">Results</div>
<svg class="a" style="left:990px;top:44px" width="30" height="8"><rect x="1.8" y="2.3" width="5" height="3.5" fill="none" stroke="#f4f4f4" stroke-width="0.9"/><rect x="1.8" y="2.3" width="5" height="1.2" fill="#f4f4f4"/><path d="M13.2 1.6 h2.6 v2.8 h0.8 v0.8 h-4.2 v-0.8 h0.8z" fill="none" stroke="#f4f4f4" stroke-width="0.8"/><path d="M14.5 5.2 v2" stroke="#f4f4f4" stroke-width="0.8"/><path d="M22.3 2 L26.5 6 M26.5 2 L22.3 6" stroke="#f4f4f4" stroke-width="1.1"/></svg>
<div class="a" style="left:885px;top:66px;width:135px;height:1px;background:#eeeeee;"></div>
<div class="a" style="left:885px;top:77.3px;width:135px;height:1px;background:#eeeeee;"></div>
<div class="a" style="left:885px;top:88.6px;width:135px;height:1px;background:#eeeeee;"></div>
<div class="a" style="left:885px;top:99.9px;width:135px;height:1px;background:#eeeeee;"></div>
<div class="a" style="left:885px;top:111.2px;width:135px;height:1px;background:#eeeeee;"></div>
<div class="a" style="left:885px;top:122.5px;width:135px;height:1px;background:#eeeeee;"></div>
<div class="t" style="left:886.5px;top:56.03px;font-size:7.5px;color:#303030;transform:scaleX(0.850);transform-origin:0 0;">Power</div>
<div class="t" style="left:909.0px;top:56.03px;font-size:7.5px;color:#303030;transform:scaleX(0.850);transform-origin:0 0;">-0.003</div>
<div class="t" style="left:931.0px;top:56.03px;font-size:7.5px;color:#404040;transform:scaleX(1.067);transform-origin:0 0;">λ</div>
<div class="t" style="left:896.1px;top:67.73px;font-size:7.5px;color:#303030;transform:scaleX(0.850);transform-origin:0 0;">PV</div>
<div class="t" style="left:909.0px;top:67.73px;font-size:7.5px;color:#303030;transform:scaleX(0.850);transform-origin:0 0;">0.022</div>
<div class="t" style="left:931.0px;top:67.73px;font-size:7.5px;color:#404040;transform:scaleX(1.067);transform-origin:0 0;">λ</div>
<div class="t" style="left:890.4px;top:79.03px;font-size:7.5px;color:#303030;transform:scaleX(0.850);transform-origin:0 0;">RMS</div>
<div class="t" style="left:909.0px;top:79.03px;font-size:7.5px;color:#303030;transform:scaleX(0.850);transform-origin:0 0;">0.009</div>
<div class="t" style="left:931.0px;top:79.03px;font-size:7.5px;color:#404040;transform:scaleX(1.067);transform-origin:0 0;">λ</div>
<div class="a" style="left:995px;top:279px;width:26px;height:1.5px;background:#5a5a5a;"></div>
<div class="a" style="left:884px;top:280px;width:137px;height:237px;background:#ffffff;border:2px solid #5a5a5a;border-top:none"></div>
<div class="a" style="left:884px;top:280.5px;width:137px;height:11.5px;background:#a2a4a2;"></div>
<svg class="a" style="left:990px;top:282.5px" width="30" height="9"><path d="M4 2 h1.2" stroke="#f4f4f4" stroke-width="1"/><path d="M13.2 2 h2.6 v2.8 h0.8 v0.8 h-4.2 v-0.8 h0.8z" fill="none" stroke="#f4f4f4" stroke-width="0.8"/><path d="M14.5 5.6 v2" stroke="#f4f4f4" stroke-width="0.8"/><path d="M22.3 2.5 L26.5 6.5 M26.5 2.5 L22.3 6.5" stroke="#f4f4f4" stroke-width="1.1"/></svg>
<div class="a" style="left:886px;top:304.2px;width:133px;height:1px;background:#eeeeee;"></div>
<div class="a" style="left:886px;top:315.55px;width:133px;height:1px;background:#eeeeee;"></div>
<div class="a" style="left:886px;top:326.9px;width:133px;height:1px;background:#eeeeee;"></div>
<div class="a" style="left:886px;top:338.25px;width:133px;height:1px;background:#eeeeee;"></div>
<div class="a" style="left:886px;top:349.59999999999997px;width:133px;height:1px;background:#eeeeee;"></div>
<div class="a" style="left:886px;top:360.95px;width:133px;height:1px;background:#eeeeee;"></div>
<div class="a" style="left:886px;top:372.29999999999995px;width:133px;height:1px;background:#eeeeee;"></div>
<div class="a" style="left:886px;top:383.65px;width:133px;height:1px;background:#eeeeee;"></div>
<div class="a" style="left:886px;top:395.0px;width:133px;height:1px;background:#eeeeee;"></div>
<div class="a" style="left:886px;top:406.34999999999997px;width:133px;height:1px;background:#eeeeee;"></div>
<div class="a" style="left:886px;top:417.7px;width:133px;height:1px;background:#eeeeee;"></div>
<div class="a" style="left:886px;top:429.04999999999995px;width:133px;height:1px;background:#eeeeee;"></div>
<div class="a" style="left:886px;top:440.4px;width:133px;height:1px;background:#eeeeee;"></div>
<div class="t" style="left:998.0px;top:375.09px;font-size:7px;color:#303030;transform:scaleX(0.907);transform-origin:0 0;">datx</div>
<div class="t" style="left:998.0px;top:397.69px;font-size:7px;color:#303030;transform:scaleX(0.942);transform-origin:0 0;">08:26:5</div>
<div class="t" style="left:997.0px;top:408.99px;font-size:7px;color:#303030;transform:scaleX(0.857);transform-origin:0 0;">NSMISS</div>
<div class="t" style="left:998.0px;top:419.99px;font-size:7px;color:#303030;transform:scaleX(0.771);transform-origin:0 0;">01</div>
<div class="t" style="left:913.4px;top:431.49px;font-size:7px;color:#303030;transform:scaleX(0.800);transform-origin:0 0;">Part Serial Number</div>
<div class="t" style="left:965.3px;top:431.49px;font-size:7px;color:#303030;transform:scaleX(1.002);transform-origin:0 0;">060225 vs. 20QC-63</div>
<div class="a" style="left:1019.5px;top:42px;width:2px;height:475px;background:#5a5a5a;"></div>
<div class="a" style="left:1021.5px;top:41px;width:2.5px;height:478px;background:#f2f2f2;"></div>
<div class="a" style="left:886px;top:506px;width:133px;height:9px;background:#f0f0f0;"></div>
<div class="a" style="left:895.6px;top:506.5px;width:59px;height:8px;background:linear-gradient(#f4f4f4,#dcdcdc);border:1px solid #b0b0b0;border-radius:2px"></div>
<svg class="a" style="left:888px;top:507px" width="130" height="7"><path d="M2 3.5 L5 1 L5 6Z" fill="#4060a0"/><path d="M128 3.5 L125 1 L125 6Z" fill="#4060a0"/><path d="M37 2 v3 M39 2 v3 M41 2 v3" stroke="#909090" stroke-width="0.7"/></svg>
<div class="a" style="left:543px;top:86px;width:452px;height:340px;background:#505050;border:1px solid #2a2c30;border-bottom:2px solid #383838;border-right:1.5px solid #303030"></div>
<div class="a" style="left:544px;top:87px;width:450px;height:15px;background:linear-gradient(#4c525b,#464a52 30%,#363739 45%,#2e2e2f);"></div>
<div class="t" style="left:548.7px;top:90.23px;font-size:7.5px;color:#d8d8d8;transform:scaleX(0.839);transform-origin:0 0;">Mask Editor</div>
<svg class="a" style="left:955px;top:88px" width="40" height="12"><path d="M3.4 7.6 h4.5" stroke="#d8d8d8" stroke-width="1.1"/><rect x="16.6" y="4.6" width="5.6" height="3.6" fill="none" stroke="#d8d8d8" stroke-width="0.9"/><rect x="16.6" y="4.6" width="5.6" height="1.3" fill="#d8d8d8"/><path d="M30.2 4.2 L34.8 8.2 M34.8 4.2 L30.2 8.2" stroke="#e0e0e0" stroke-width="1.2"/></svg>
<div class="a" style="left:544px;top:101px;width:450px;height:16px;background:#4a4a4a;"></div>
<div class="a" style="left:546px;top:102px;width:42px;height:13.7px;background:linear-gradient(#e4e7eb,#ced2d8 50%,#bcc1c8);border-radius:2px"></div>
<div class="a" style="left:580.5px;top:102px;width:7.5px;height:13.7px;background:linear-gradient(90deg,#a4a9b0,#8a8f96);border-radius:0 2px 2px 0"></div>
<div class="a" style="left:583px;top:110px;width:3px;height:2.5px;background:#222;"></div>
<div class="a" style="left:548.5px;top:104.5px;width:1px;height:1px;background:#505050;"></div><div class="a" style="left:548.5px;top:106.5px;width:1px;height:1px;background:#505050;"></div><div class="a" style="left:548.5px;top:108.5px;width:1px;height:1px;background:#505050;"></div><div class="a" style="left:548.5px;top:110.5px;width:1px;height:1px;background:#505050;"></div>
<div class="a" style="left:590px;top:102px;width:84.39999999999998px;height:13.7px;background:linear-gradient(#e4e7eb,#ced2d8 50%,#bcc1c8);border-radius:2px"></div>
<div class="a" style="left:666.9px;top:102px;width:7.5px;height:13.7px;background:linear-gradient(90deg,#a4a9b0,#8a8f96);border-radius:0 2px 2px 0"></div>
<div class="a" style="left:669.4px;top:110px;width:3px;height:2.5px;background:#222;"></div>
<div class="a" style="left:592.5px;top:104.5px;width:1px;height:1px;background:#505050;"></div><div class="a" style="left:592.5px;top:106.5px;width:1px;height:1px;background:#505050;"></div><div class="a" style="left:592.5px;top:108.5px;width:1px;height:1px;background:#505050;"></div><div class="a" style="left:592.5px;top:110.5px;width:1px;height:1px;background:#505050;"></div>
<div class="a" style="left:676.7px;top:102px;width:181.5999999999999px;height:13.7px;background:linear-gradient(#e4e7eb,#ced2d8 50%,#bcc1c8);border-radius:2px"></div>
<div class="a" style="left:850.8px;top:102px;width:7.5px;height:13.7px;background:linear-gradient(90deg,#a4a9b0,#8a8f96);border-radius:0 2px 2px 0"></div>
<div class="a" style="left:853.3px;top:110px;width:3px;height:2.5px;background:#222;"></div>
<div class="a" style="left:679.2px;top:104.5px;width:1px;height:1px;background:#505050;"></div><div class="a" style="left:679.2px;top:106.5px;width:1px;height:1px;background:#505050;"></div><div class="a" style="left:679.2px;top:108.5px;width:1px;height:1px;background:#505050;"></div><div class="a" style="left:679.2px;top:110.5px;width:1px;height:1px;background:#505050;"></div>
<div class="a" style="left:859.7px;top:102px;width:104.29999999999995px;height:13.7px;background:linear-gradient(#e4e7eb,#ced2d8 50%,#bcc1c8);border-radius:2px"></div>
<div class="a" style="left:956.5px;top:102px;width:7.5px;height:13.7px;background:linear-gradient(90deg,#a4a9b0,#8a8f96);border-radius:0 2px 2px 0"></div>
<div class="a" style="left:959px;top:110px;width:3px;height:2.5px;background:#222;"></div>
<div class="a" style="left:862.2px;top:104.5px;width:1px;height:1px;background:#505050;"></div><div class="a" style="left:862.2px;top:106.5px;width:1px;height:1px;background:#505050;"></div><div class="a" style="left:862.2px;top:108.5px;width:1px;height:1px;background:#505050;"></div><div class="a" style="left:862.2px;top:110.5px;width:1px;height:1px;background:#505050;"></div>
<div class="a" style="left:965.7px;top:102px;width:27.899999999999977px;height:13.7px;background:linear-gradient(#e4e7eb,#ced2d8 50%,#bcc1c8);border-radius:2px"></div>
<div class="a" style="left:986.1px;top:102px;width:7.5px;height:13.7px;background:linear-gradient(90deg,#a4a9b0,#8a8f96);border-radius:0 2px 2px 0"></div>
<div class="a" style="left:988.6px;top:110px;width:3px;height:2.5px;background:#222;"></div>
<div class="a" style="left:968.2px;top:104.5px;width:1px;height:1px;background:#505050;"></div><div class="a" style="left:968.2px;top:106.5px;width:1px;height:1px;background:#505050;"></div><div class="a" style="left:968.2px;top:108.5px;width:1px;height:1px;background:#505050;"></div><div class="a" style="left:968.2px;top:110.5px;width:1px;height:1px;background:#505050;"></div>
<svg class="a" style="left:554px;top:103.5px" width="12" height="11"><path d="M0.5 2 h4 l1 1.5 h5.5 v6 h-10.5z" fill="#f4d078" stroke="#d0a040" stroke-width="0.5"/><path d="M6 7 h3 v-2 l2.5 2.8 l-2.5 2.8 v-2 h-3z" fill="#50b050"/></svg>
<svg class="a" style="left:568px;top:103.5px" width="11" height="11"><rect x="0.5" y="0.5" width="10" height="10" rx="1.5" fill="#78aae8" stroke="#5a88c8" stroke-width="0.6"/><rect x="2.5" y="1" width="6" height="3" fill="#e0ecf8"/><rect x="2.5" y="6" width="6" height="3" fill="#a8d088"/></svg>
<div class="a" style="left:595.8px;top:102px;width:13.2px;height:13.2px;background:#f8ae48;"></div>
<svg class="a" style="left:598px;top:103px" width="10" height="12"><path d="M2 1 L2 10 L4.5 8 L6.5 11 L8 10 L6 7 L9 7Z" fill="#d8d8d8" stroke="#909090" stroke-width="0.6"/></svg>
<svg class="a" style="left:612px;top:103.5px" width="12" height="12"><path d="M7.5 2.2 A4 4 0 1 1 3.8 2.6" stroke="#50a850" stroke-width="1.5" fill="none"/><path d="M2 0.8 L5.5 1.5 L3.5 4.5Z" fill="#50a850"/></svg>
<svg class="a" style="left:626px;top:103.5px" width="12" height="12"><rect x="2.2" y="2.2" width="7.6" height="7.6" fill="#80b0ee"/><rect x="0.5" y="0.5" width="2.5" height="2.5" fill="#333"/><rect x="9" y="9" width="2.5" height="2.5" fill="#333"/><rect x="9" y="0.5" width="2.5" height="2.5" fill="#666"/><rect x="0.5" y="9" width="2.5" height="2.5" fill="#666"/></svg>
<svg class="a" style="left:640px;top:103.5px" width="12" height="12"><circle cx="6" cy="6" r="3.8" fill="#80b0ee"/><g fill="#333"><rect x="0.5" y="0.5" width="2.5" height="2.5"/><rect x="9" y="9" width="2.5" height="2.5"/><rect x="9" y="0.5" width="2.5" height="2.5"/><rect x="0.5" y="9" width="2.5" height="2.5"/><rect x="4.8" y="0" width="2.4" height="2"/><rect x="4.8" y="10" width="2.4" height="2"/></g></svg>
<svg class="a" style="left:653px;top:103.5px" width="12" height="11"><rect x="0.5" y="1" width="10.5" height="9" fill="#a8c8f4" stroke="#7aa0e0" stroke-width="0.6"/><rect x="5" y="3" width="5.5" height="6" fill="#fff"/><path d="M2 3.5 h2 M2 6 h2 M2 8 h2" stroke="#fff" stroke-width="0.8"/></svg>
<svg class="a" style="left:684px;top:104px" width="12" height="11"><rect x="0.5" y="0.5" width="7" height="6" fill="#8ab4f4" stroke="#5a88e0" stroke-width="0.6"/><rect x="3" y="3.5" width="8" height="6.5" fill="#4a80f0" stroke="#3060d8" stroke-width="0.6"/></svg>
<svg class="a" style="left:698px;top:104px" width="12" height="12"><rect x="1" y="1" width="6" height="5" fill="#fff"/><rect x="3" y="3" width="7" height="6" fill="#7aa6ee"/><rect x="5" y="7" width="6" height="4" fill="#fff"/></svg>
<svg class="a" style="left:712px;top:104px" width="12" height="12"><rect x="2" y="1.5" width="7.5" height="7" fill="#7aa6ee"/><rect x="5" y="7.5" width="6" height="3.5" fill="#fff"/></svg>
<svg class="a" style="left:726px;top:104px" width="12" height="12"><rect x="1" y="1" width="7" height="6" fill="#fff"/><rect x="4" y="4" width="7.5" height="6.5" fill="#7aa6ee"/></svg>
<svg class="a" style="left:740px;top:104px" width="12" height="12"><rect x="1" y="0.5" width="6" height="4" fill="#fff"/><rect x="3" y="3.5" width="6" height="5" fill="#7aa6ee"/><rect x="5" y="7" width="6" height="4" fill="#fff"/></svg>
<svg class="a" style="left:754px;top:104.5px" width="11" height="9"><path d="M0.5 4.5 L4.8 0.8 L4.8 2.8 L10.5 2.8 L10.5 6.2 L4.8 6.2 L4.8 8.2Z" fill="#88b840" stroke="#6a9a28" stroke-width="0.5"/></svg>
<svg class="a" style="left:768px;top:104.5px" width="11" height="9"><path d="M10.5 4.5 L6.2 0.8 L6.2 2.8 L0.5 2.8 L0.5 6.2 L6.2 6.2 L6.2 8.2Z" fill="#88b840" stroke="#6a9a28" stroke-width="0.5"/></svg>
<svg class="a" style="left:782.5px;top:103.5px" width="10" height="12"><path d="M4.5 0.5 L8.5 4.8 L6.3 4.8 L6.3 10.5 L2.7 10.5 L2.7 4.8 L0.5 4.8Z" fill="#88b840" stroke="#6a9a28" stroke-width="0.5"/></svg>
<svg class="a" style="left:796px;top:103.5px" width="10" height="12"><path d="M4.5 10.5 L8.5 6.2 L6.3 6.2 L6.3 0.5 L2.7 0.5 L2.7 6.2 L0.5 6.2Z" fill="#88b840" stroke="#6a9a28" stroke-width="0.5"/></svg>
<div class="t" style="left:810.0px;top:105.44px;font-size:7.5px;color:#383848;font-weight:bold;transform:scaleX(0.784);transform-origin:0 0;">Flip X</div>
<div class="t" style="left:830.6px;top:105.44px;font-size:7.5px;color:#383848;font-weight:bold;transform:scaleX(0.789);transform-origin:0 0;">Flip Y</div>
<svg class="a" style="left:867px;top:104px" width="10" height="11"><path d="M3 9.5 L7.5 1 M6.5 9.5 L5 4" stroke="#5a98d8" stroke-width="1.1"/><circle cx="3" cy="8.8" r="1.8" fill="#4a88c8"/><circle cx="6.5" cy="9" r="1.6" fill="#4a88c8"/></svg>
<svg class="a" style="left:881px;top:104px" width="11" height="11"><rect x="0.5" y="0.5" width="6" height="7.5" fill="#c8dcf8" stroke="#8ab0e0" stroke-width="0.6"/><rect x="3.8" y="2.8" width="6.2" height="7.7" fill="#e4eeff" stroke="#8ab0e0" stroke-width="0.6"/></svg>
<svg class="a" style="left:895px;top:103.5px" width="11" height="12"><rect x="0.5" y="1" width="6.5" height="9.5" rx="1" fill="#e8a848" stroke="#c08030" stroke-width="0.6"/><rect x="3.8" y="3.5" width="6.5" height="7.5" fill="#e4eeff" stroke="#8ab0e0" stroke-width="0.6"/></svg>
<svg class="a" style="left:909.5px;top:104px" width="10" height="10"><path d="M1.5 1.5 L8.5 8.5 M8.5 1.5 L1.5 8.5" stroke="#e01818" stroke-width="1.5"/></svg>
<svg class="a" style="left:923px;top:104.5px" width="11" height="9"><path d="M1 8 L1 4.5 Q1 3 3 3 L6.5 3 L6.5 1 L10 4 L6.5 7 L6.5 5 L3 5 L3 8Z" fill="#98b860" opacity="0.85"/></svg>
<svg class="a" style="left:938px;top:104.5px" width="11" height="9"><path d="M10 8 L10 4.5 Q10 3 8 3 L4.5 3 L4.5 1 L1 4 L4.5 7 L4.5 5 L8 5 L8 8Z" fill="#d0d2d6"/></svg>
<svg class="a" style="left:973px;top:103.5px" width="12" height="12"><circle cx="4.8" cy="5" r="3.8" fill="#c8e0f8" stroke="#9ac0e0" stroke-width="0.5"/><path d="M7.5 2 L10 5 L7.5 8 L5 5Z" fill="#40a848"/><path d="M7.5 8 L8 10.5" stroke="#e09040" stroke-width="1.6"/></svg>
<div class="a" style="left:545.2px;top:117.8px;width:14.5px;height:97px;background:linear-gradient(90deg,#c4c8ce,#d6dade 50%,#b8bcc2);border-radius:2px"></div>
<div class="a" style="left:548.5px;top:119.5px;width:1px;height:1px;background:#505050;"></div><div class="a" style="left:550.5px;top:119.5px;width:1px;height:1px;background:#505050;"></div><div class="a" style="left:552.5px;top:119.5px;width:1px;height:1px;background:#505050;"></div><div class="a" style="left:554.5px;top:119.5px;width:1px;height:1px;background:#505050;"></div>
<svg class="a" style="left:547px;top:123.5px" width="11" height="10"><rect x="1.5" y="2.5" width="8" height="5" fill="none" stroke="#303030" stroke-width="1.1"/></svg>
<svg class="a" style="left:547px;top:135.5px" width="11" height="10"><rect x="1.5" y="1" width="8" height="8" fill="none" stroke="#303030" stroke-width="1.1"/></svg>
<svg class="a" style="left:547px;top:147.3px" width="11" height="10"><path d="M2 9 L3 2 L9 1 L6 5 L9 9Z" fill="none" stroke="#303030" stroke-width="1.1"/></svg>
<svg class="a" style="left:547px;top:159.5px" width="11" height="10"><circle cx="5.5" cy="5" r="4" fill="none" stroke="#303030" stroke-width="1.1"/><circle cx="2.5" cy="4" r="1.3" fill="#e02020"/></svg>
<svg class="a" style="left:547px;top:171.5px" width="11" height="10"><circle cx="5.5" cy="5" r="4" fill="none" stroke="#303030" stroke-width="1.1"/><circle cx="5.5" cy="5" r="1.3" fill="#e02020"/></svg>
<svg class="a" style="left:547px;top:183.5px" width="11" height="10"><ellipse cx="5.5" cy="5" rx="4.5" ry="2.8" fill="none" stroke="#303030" stroke-width="1.1"/></svg>
<svg class="a" style="left:547px;top:195.5px" width="11" height="10"><circle cx="5.5" cy="5" r="4" fill="none" stroke="#303030" stroke-width="1.1"/><path d="M2.5 8 L8.5 2" stroke="#e02020" stroke-width="1.3"/></svg>
<div class="a" style="left:545.5px;top:209px;width:14px;height:6px;background:linear-gradient(#8c9098,#70747c);"></div>
<div class="a" style="left:553px;top:211px;width:3px;height:2px;background:#eee;"></div>
<div class="a" style="left:545.2px;top:217.8px;width:14.5px;height:37.7px;background:linear-gradient(90deg,#c4c8ce,#d6dade 50%,#b8bcc2);border-radius:2px"></div>
<div class="a" style="left:548.5px;top:219.5px;width:1px;height:1px;background:#505050;"></div><div class="a" style="left:550.5px;top:219.5px;width:1px;height:1px;background:#505050;"></div><div class="a" style="left:552.5px;top:219.5px;width:1px;height:1px;background:#505050;"></div><div class="a" style="left:554.5px;top:219.5px;width:1px;height:1px;background:#505050;"></div>
<svg class="a" style="left:547px;top:224px" width="11" height="10"><ellipse cx="5.5" cy="5" rx="4.5" ry="3" fill="#fff" stroke="#e02020" stroke-width="1"/><path d="M1 5 A4.5 3 0 0 0 5.5 8 L5.5 2 A4.5 3 0 0 0 1 5Z" fill="#e02020"/></svg>
<svg class="a" style="left:547px;top:235.5px" width="11" height="11"><rect x="1" y="1" width="9" height="9" fill="#fff" stroke="#808080" stroke-width="0.8"/><rect x="1" y="1" width="5" height="9" fill="#e02020"/></svg>
<div class="a" style="left:545.5px;top:250px;width:14px;height:5.5px;background:linear-gradient(#8c9098,#70747c);"></div>
<div class="a" style="left:553px;top:251.5px;width:3px;height:2px;background:#eee;"></div>
<div class="a" style="left:560px;top:117px;width:331.5px;height:10px;background:linear-gradient(#ffffff,#f0f0f0);"></div>
<div class="a" style="left:560px;top:117px;width:11.5px;height:10px;background:#e8e8e8;border-right:1px solid #c8c8c8"></div>
<div class="a" style="left:560px;top:127px;width:11px;height:263px;background:linear-gradient(90deg,#f0f0f0,#ffffff);"></div>
<svg class="a" style="left:0;top:0" width="1024" height="519"><path d="M570.5 117 v10 M575.5 125 v2 M580.6 125 v2 M585.6 125 v2 M590.7 125 v2 M595.7 123 v4 M600.7 125 v2 M605.8 125 v2 M610.8 125 v2 M615.9 125 v2 M620.9 117 v10 M625.9 125 v2 M631.0 125 v2 M636.0 125 v2 M641.1 125 v2 M646.1 123 v4 M651.1 125 v2 M656.2 125 v2 M661.2 125 v2 M666.3 125 v2 M671.3 117 v10 M676.3 125 v2 M681.4 125 v2 M686.4 125 v2 M691.5 125 v2 M696.5 123 v4 M701.5 125 v2 M706.6 125 v2 M711.6 125 v2 M716.7 125 v2 M721.7 117 v10 M726.7 125 v2 M731.8 125 v2 M736.8 125 v2 M741.9 125 v2 M746.9 123 v4 M751.9 125 v2 M757.0 125 v2 M762.0 125 v2 M767.1 125 v2 M772.1 117 v10 M777.1 125 v2 M782.2 125 v2 M787.2 125 v2 M792.3 125 v2 M797.3 123 v4 M802.3 125 v2 M807.4 125 v2 M812.4 125 v2 M817.5 125 v2 M822.5 117 v10 M827.5 125 v2 M832.6 125 v2 M837.6 125 v2 M842.7 125 v2 M847.7 123 v4 M852.7 125 v2 M857.8 125 v2 M862.8 125 v2 M867.9 125 v2 M872.9 117 v10 M877.9 125 v2 M883.0 125 v2 M888.0 125 v2" stroke="#606060" stroke-width="0.9"/></svg>
<div class="t" style="left:606.9px;top:116.99px;font-size:7px;color:#303040;transform:scaleX(1.028);transform-origin:0 0;">100</div>
<div class="t" style="left:657.3px;top:116.99px;font-size:7px;color:#303040;transform:scaleX(1.028);transform-origin:0 0;">200</div>
<div class="t" style="left:707.7px;top:116.99px;font-size:7px;color:#303040;transform:scaleX(1.028);transform-origin:0 0;">300</div>
<div class="t" style="left:758.1px;top:116.99px;font-size:7px;color:#303040;transform:scaleX(1.028);transform-origin:0 0;">400</div>
<div class="t" style="left:808.5px;top:116.99px;font-size:7px;color:#303040;transform:scaleX(1.028);transform-origin:0 0;">500</div>
<div class="t" style="left:858.9px;top:116.99px;font-size:7px;color:#303040;transform:scaleX(1.028);transform-origin:0 0;">600</div>
<svg class="a" style="left:0;top:0" width="1024" height="519"><path d="M560 127.0 h11 M569 132.0 h2 M569 137.0 h2 M569 142.0 h2 M569 147.0 h2 M567 152.0 h4 M569 157.0 h2 M569 162.0 h2 M569 167.0 h2 M569 172.0 h2 M560 177.0 h11 M569 182.0 h2 M569 187.0 h2 M569 192.0 h2 M569 197.0 h2 M567 202.0 h4 M569 207.0 h2 M569 212.0 h2 M569 217.0 h2 M569 222.0 h2 M560 227.0 h11 M569 232.0 h2 M569 237.0 h2 M569 242.0 h2 M569 247.0 h2 M567 252.0 h4 M569 257.0 h2 M569 262.0 h2 M569 267.0 h2 M569 272.0 h2 M560 277.0 h11 M569 282.0 h2 M569 287.0 h2 M569 292.0 h2 M569 297.0 h2 M567 302.0 h4 M569 307.0 h2 M569 312.0 h2 M569 317.0 h2 M569 322.0 h2 M560 327.0 h11 M569 332.0 h2 M569 337.0 h2 M569 342.0 h2 M569 347.0 h2 M567 352.0 h4 M569 357.0 h2 M569 362.0 h2 M569 367.0 h2 M569 372.0 h2 M560 377.0 h11 M569 382.0 h2 M569 387.0 h2" stroke="#606060" stroke-width="0.9"/></svg>
<div class="t" style="left:557.56px;top:166.69px;width:11.68px;font-size:7px;color:#303040;transform:rotate(90deg) scaleX(0.85);transform-origin:5.84px 3.51px;">100</div>
<div class="t" style="left:557.56px;top:216.69px;width:11.68px;font-size:7px;color:#303040;transform:rotate(90deg) scaleX(0.85);transform-origin:5.84px 3.51px;">200</div>
<div class="t" style="left:557.56px;top:266.69px;width:11.68px;font-size:7px;color:#303040;transform:rotate(90deg) scaleX(0.85);transform-origin:5.84px 3.51px;">300</div>
<div class="t" style="left:557.56px;top:316.69px;width:11.68px;font-size:7px;color:#303040;transform:rotate(90deg) scaleX(0.85);transform-origin:5.84px 3.51px;">400</div>
<div class="t" style="left:557.56px;top:366.69px;width:11.68px;font-size:7px;color:#303040;transform:rotate(90deg) scaleX(0.85);transform-origin:5.84px 3.51px;">500</div>
<div class="a" style="left:571.5px;top:127px;width:319.5px;height:240px;background:#000;"></div>
<svg class="a" style="left:0;top:0" width="1024" height="519"><defs><radialGradient id="sphg" cx="735" cy="262" r="122" gradientUnits="userSpaceOnUse"><stop offset="0" stop-color="#505050"/><stop offset="0.1" stop-color="#5c5c5c"/><stop offset="0.24" stop-color="#8a8a8a"/><stop offset="0.38" stop-color="#b2b2b2"/><stop offset="0.48" stop-color="#aaaaaa"/><stop offset="0.58" stop-color="#8e8e8e"/><stop offset="0.68" stop-color="#9e9e9e"/><stop offset="0.8" stop-color="#c2c2c2"/><stop offset="0.92" stop-color="#c6c6c6"/><stop offset="1" stop-color="#b4b4b4"/></radialGradient><linearGradient id="rimg" x1="0" y1="0" x2="1" y2="1"><stop offset="0" stop-color="#303030" stop-opacity="0.75"/><stop offset="0.45" stop-color="#404040" stop-opacity="0.35"/><stop offset="0.7" stop-color="#404040" stop-opacity="0"/></linearGradient><filter id="sphn" x="0" y="0" width="100%" height="100%"><feTurbulence type="fractalNoise" baseFrequency="0.045" numOctaves="3" seed="11"/><feColorMatrix type="matrix" values="0 0 0 0 0.5  0 0 0 0 0.5  0 0 0 0 0.5  0 0 0 -1.6 0.95"/></filter><filter id="sphf" x="0" y="0" width="100%" height="100%"><feTurbulence type="fractalNoise" baseFrequency="0.8" numOctaves="1" seed="13"/><feColorMatrix type="matrix" values="0 0 0 0 0  0 0 0 0 0  0 0 0 0 0  0 0 0 -1.2 0.7"/></filter><filter id="rimblur" x="-10%" y="-10%" width="120%" height="120%"><feGaussianBlur stdDeviation="2.5"/></filter><clipPath id="sphc"><circle cx="733.2" cy="245.1" r="110"/></clipPath></defs><circle cx="733.2" cy="245.1" r="110" fill="url(#sphg)"/><g clip-path="url(#sphc)"><rect x="620" y="130" width="230" height="230" fill="#000" filter="url(#sphn)" opacity="0.4"/><rect x="620" y="130" width="230" height="230" fill="#000" filter="url(#sphf)" opacity="0.18"/><circle cx="733.2" cy="245.1" r="108" fill="none" stroke="url(#rimg)" stroke-width="9" filter="url(#rimblur)"/></g><g fill="none" stroke="#e02828" stroke-width="0.9"><ellipse cx="685.7" cy="248.1" rx="25" ry="88.5"/><ellipse cx="717" cy="249.3" rx="24.7" ry="88.3"/><ellipse cx="746.7" cy="249" rx="25" ry="87.5"/><ellipse cx="781" cy="246.3" rx="24" ry="89" fill="rgba(255,70,70,0.36)"/></g></svg>
<div class="a" style="left:571px;top:367px;width:320.5px;height:57px;background:#eef0f2;"></div>
<div class="a" style="left:560px;top:390px;width:11px;height:34px;background:#eef0f2;"></div>
<div class="a" style="left:891.5px;top:117px;width:102px;height:307px;background:#eef0f2;"></div>
<div class="t" style="left:901.0px;top:125.04px;font-size:7.5px;color:#303050;transform:scaleX(0.777);transform-origin:0 0;">Data Source:</div>
<div class="a" style="left:901.2px;top:133.6px;width:77.4px;height:10.0px;background:#fff;border:1px solid #a8acb4"></div><div class="t" style="left:903.5px;top:135.14px;font-size:7.5px;color:#202030;transform:scaleX(0.832);transform-origin:0 0;">Surface</div><svg class="a" style="left:972px;top:137.6px" width="4" height="3"><path d="M0 0 L4 0 L2 2.5Z" fill="#333"/></svg>
<div class="t" style="left:901.0px;top:148.94px;font-size:7.5px;color:#303050;transform:scaleX(0.811);transform-origin:0 0;">Mask Type:</div>
<div class="a" style="left:901.2px;top:157.4px;width:77.4px;height:10.099999999999994px;background:#fff;border:1px solid #a8acb4"></div><div class="t" style="left:903.5px;top:158.99px;font-size:7.5px;color:#202030;transform:scaleX(0.832);transform-origin:0 0;">Surface</div><svg class="a" style="left:972px;top:161.45px" width="4" height="3"><path d="M0 0 L4 0 L2 2.5Z" fill="#333"/></svg>
<div class="a" style="left:902.3px;top:176.4px;width:6.5px;height:6.5px;background:#f4f6f8;border:1px solid #9aa0a8"></div>
<svg class="a" style="left:903px;top:177.5px" width="5" height="5"><path d="M0.6 2.5 L2 4.2 L4.5 0.5" stroke="#3050a0" stroke-width="0.9" fill="none"/></svg>
<div class="t" style="left:910.0px;top:176.04px;font-size:7.5px;color:#303050;transform:scaleX(0.745);transform-origin:0 0;">Mask Align On</div>
<div class="a" style="left:901.6px;top:187.7px;width:58px;height:25px;background:linear-gradient(#f4f6f8,#dfe4ea 55%,#d0d6de);border:1px solid #a0a6ae;border-radius:2px"></div>
<div class="t" style="left:909.7px;top:196.64px;font-size:7.5px;color:#303040;transform:scaleX(0.761);transform-origin:0 0;">Align Properties</div>
<div class="a" style="left:895.2px;top:222.8px;width:96.5px;height:159px;background:transparent;border:1px solid #dde0e3;border-radius:2px"></div>
<div class="a" style="left:898px;top:218px;width:48px;height:8px;background:#eef0f2;"></div>
<div class="t" style="left:899.5px;top:218.54px;font-size:7.5px;color:#303040;transform:scaleX(0.773);transform-origin:0 0;">Shape Properties</div>
<div class="a" style="left:897.5px;top:231.5px;width:12.5px;height:9.5px;background:#c8dcf0;"></div>
<svg class="a" style="left:898px;top:232px" width="40" height="10"><path d="M2 2 h2 M2 5 h2 M2 7.5 h2 M6.5 1.5 v7" stroke="#304060" stroke-width="0.8"/><path d="M7 3 h3 M7 6 h3" stroke="#304060" stroke-width="0.6"/><text x="13.2" y="5" font-size="5" fill="#2050c0" font-family="Liberation Sans">A</text><text x="13.2" y="10" font-size="5" fill="#c02020" font-family="Liberation Sans">Z</text><path d="M19 1 v7 M17.6 6.5 L19 9 L20.4 6.5" stroke="#202020" stroke-width="0.9" fill="none"/><path d="M25.5 0.5 v9" stroke="#a0a0a0" stroke-width="0.8"/><rect x="29" y="1.5" width="8.5" height="7" fill="#e0e0e0" stroke="#b0b0b0" stroke-width="0.6"/></svg>
<div class="a" style="left:897.6px;top:243.7px;width:89.6px;height:102.8px;background:#fff;border:1px solid #b4b8bc"></div>
<div class="a" style="left:897.6px;top:349px;width:89.6px;height:31px;background:#eeeeee;border:1px solid #c4c8cc"></div>
</body></html>
